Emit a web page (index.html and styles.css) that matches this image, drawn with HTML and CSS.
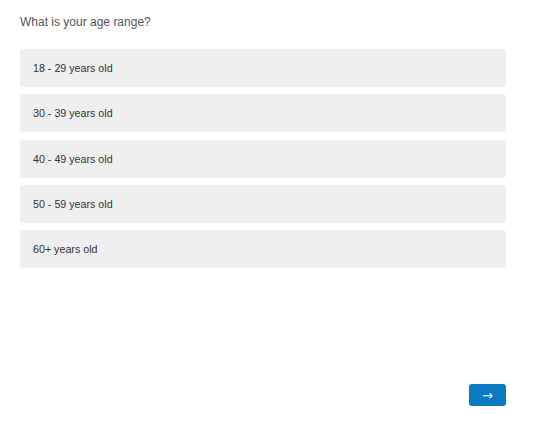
FILE: index.html
```html
<!DOCTYPE html>
<html>
<head>
<meta charset="utf-8">
<link rel="stylesheet" href="styles.css">
</head>
<body>
<div class="page">
  <div class="question">What is your age range?</div>
  <div class="options">
    <div class="option">18 - 29 years old</div>
    <div class="option">30 - 39 years old</div>
    <div class="option">40 - 49 years old</div>
    <div class="option">50 - 59 years old</div>
    <div class="option">60+ years old</div>
  </div>
  <div class="footer">
    <button class="next">&#8594;</button>
  </div>
</div>
</body>
</html>
```
FILE: styles.css
```css
html, body {
  margin: 0;
  padding: 0;
  background: #fff;
}
body {
  font-family: "Liberation Sans", Arial, sans-serif;
}
.page {
  width: 486px;
  padding: 14px 31px 0 20px;
  height: 407px;
  display: flex;
  flex-direction: column;
}
.question {
  font-size: 12px;
  color: #555;
  line-height: 16px;
  height: 16px;
}
.options {
  margin-top: 19px;
  display: flex;
  flex-direction: column;
  gap: 7.3px;
}
.option {
  height: 38px;
  box-sizing: border-box;
  background: #efefef;
  border-radius: 3px;
  padding-left: 13px;
  display: flex;
  align-items: center;
  font-size: 10.7px;
  color: #333;
}
.footer {
  margin-top: auto;
  margin-bottom: 15px;
  display: flex;
  justify-content: flex-end;
}
.next {
  width: 37px;
  height: 22px;
  background: #0a7ac4;
  border: none;
  border-radius: 3px;
  color: #fff;
  font-family: "DejaVu Sans", sans-serif;
  font-size: 13px;
  padding: 0;
  display: flex;
  align-items: center;
  justify-content: center;
}
```
